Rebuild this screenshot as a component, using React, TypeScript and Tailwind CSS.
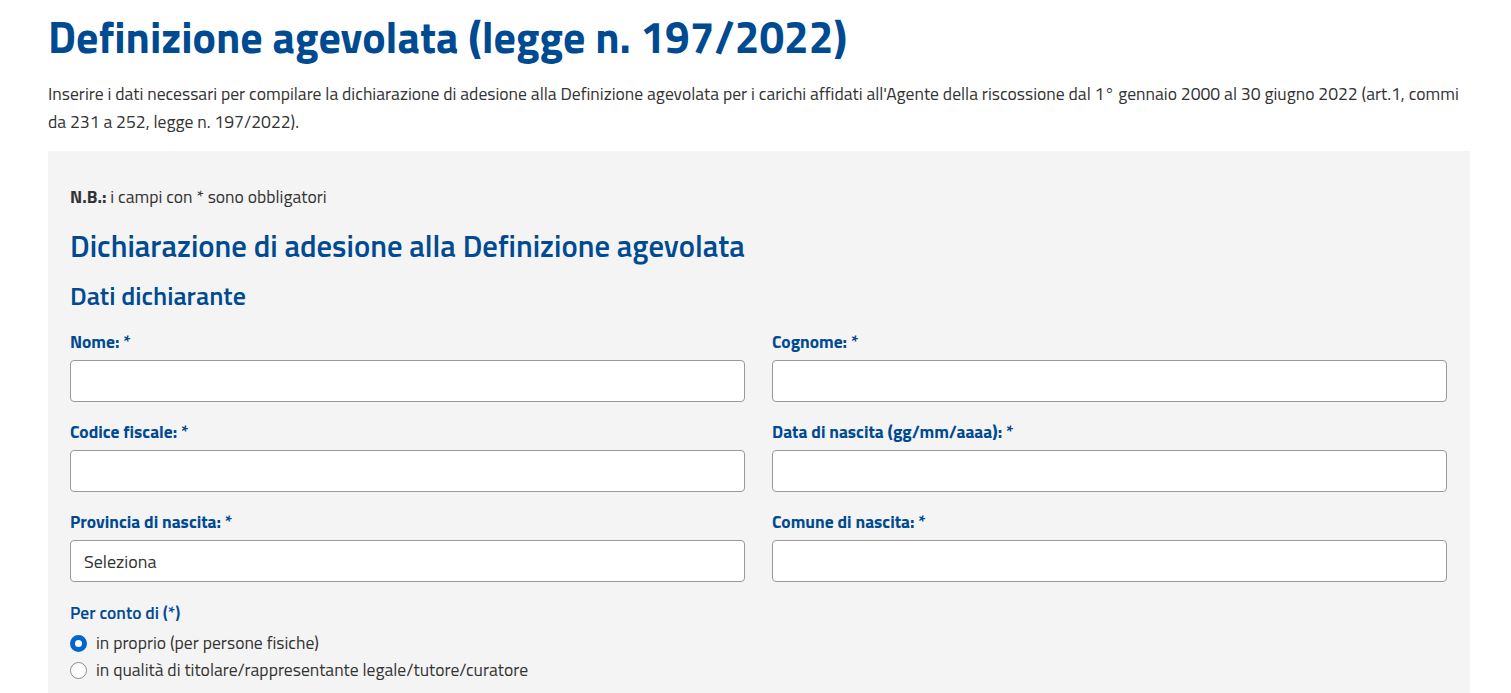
import React from "react";

function Field({ label, value }: { label: string; value?: string }) {
  return (
    <div className="flex flex-col">
      <label className="text-[17.5px] leading-[22px] font-bold text-[#004a92]">{label}</label>
      <div className="mt-[7px] h-[42px] bg-white border border-[#999] rounded-[4px] px-[13px] flex items-center text-[18px] text-[#333]">
        {value}
      </div>
    </div>
  );
}

export default function App() {
  return (
    <div className="bg-white min-h-screen pl-[48px] pr-[41px] pt-[10px] text-[#333] font-['Titillium_Web','Open_Sans',sans-serif]">
      <h1 className="text-[44px] leading-[54px] font-bold text-[#004a92]">Definizione agevolata (legge n. 197/2022)</h1>
      <p className="mt-[16px] text-[17.6px] leading-[28px] text-[#333]">
        Inserire i dati necessari per compilare la dichiarazione di adesione alla Definizione agevolata per i carichi affidati all'Agente della riscossione dal 1° gennaio 2000 al 30 giugno 2022 (art.1, commi da 231 a 252, legge n. 197/2022).
      </p>
      <div className="mt-[15px] bg-[#f4f4f4] pl-[22px] pr-[23px] pt-[33px] pb-[20px]">
        <div className="text-[17.6px] leading-[26px]">
          <span className="font-bold">N.B.:</span> i campi con * sono obbligatori
        </div>
        <h2 className="mt-[17px] text-[30.7px] leading-[37px] font-semibold text-[#004a92]">Dichiarazione di adesione alla Definizione agevolata</h2>
        <h3 className="mt-[16px] text-[26px] leading-[31px] font-semibold text-[#004a92]">Dati dichiarante</h3>
        <div className="mt-[20px] grid grid-cols-2 gap-x-[27px] gap-y-[19px]">
          <Field label="Nome: *" />
          <Field label="Cognome: *" />
          <Field label="Codice fiscale: *" />
          <Field label="Data di nascita (gg/mm/aaaa): *" />
          <Field label="Provincia di nascita: *" value="Seleziona" />
          <Field label="Comune di nascita: *" />
        </div>
        <div className="mt-[20px] text-[17.5px] leading-[22px] font-semibold text-[#004a92]">Per conto di (*)</div>
        <div className="mt-[8px] flex flex-col gap-[5px] text-[17.6px] leading-[22px]">
          <label className="flex items-center gap-[9px]">
            <span className="w-[17px] h-[17px] rounded-full border-[5px] border-[#0066cc] bg-white" />
            in proprio (per persone fisiche)
          </label>
          <label className="flex items-center gap-[9px]">
            <span className="w-[17px] h-[17px] rounded-full border border-[#8a8a8a] bg-white" />
            in qualità di titolare/rappresentante legale/tutore/curatore
          </label>
        </div>
      </div>
    </div>
  );
}
